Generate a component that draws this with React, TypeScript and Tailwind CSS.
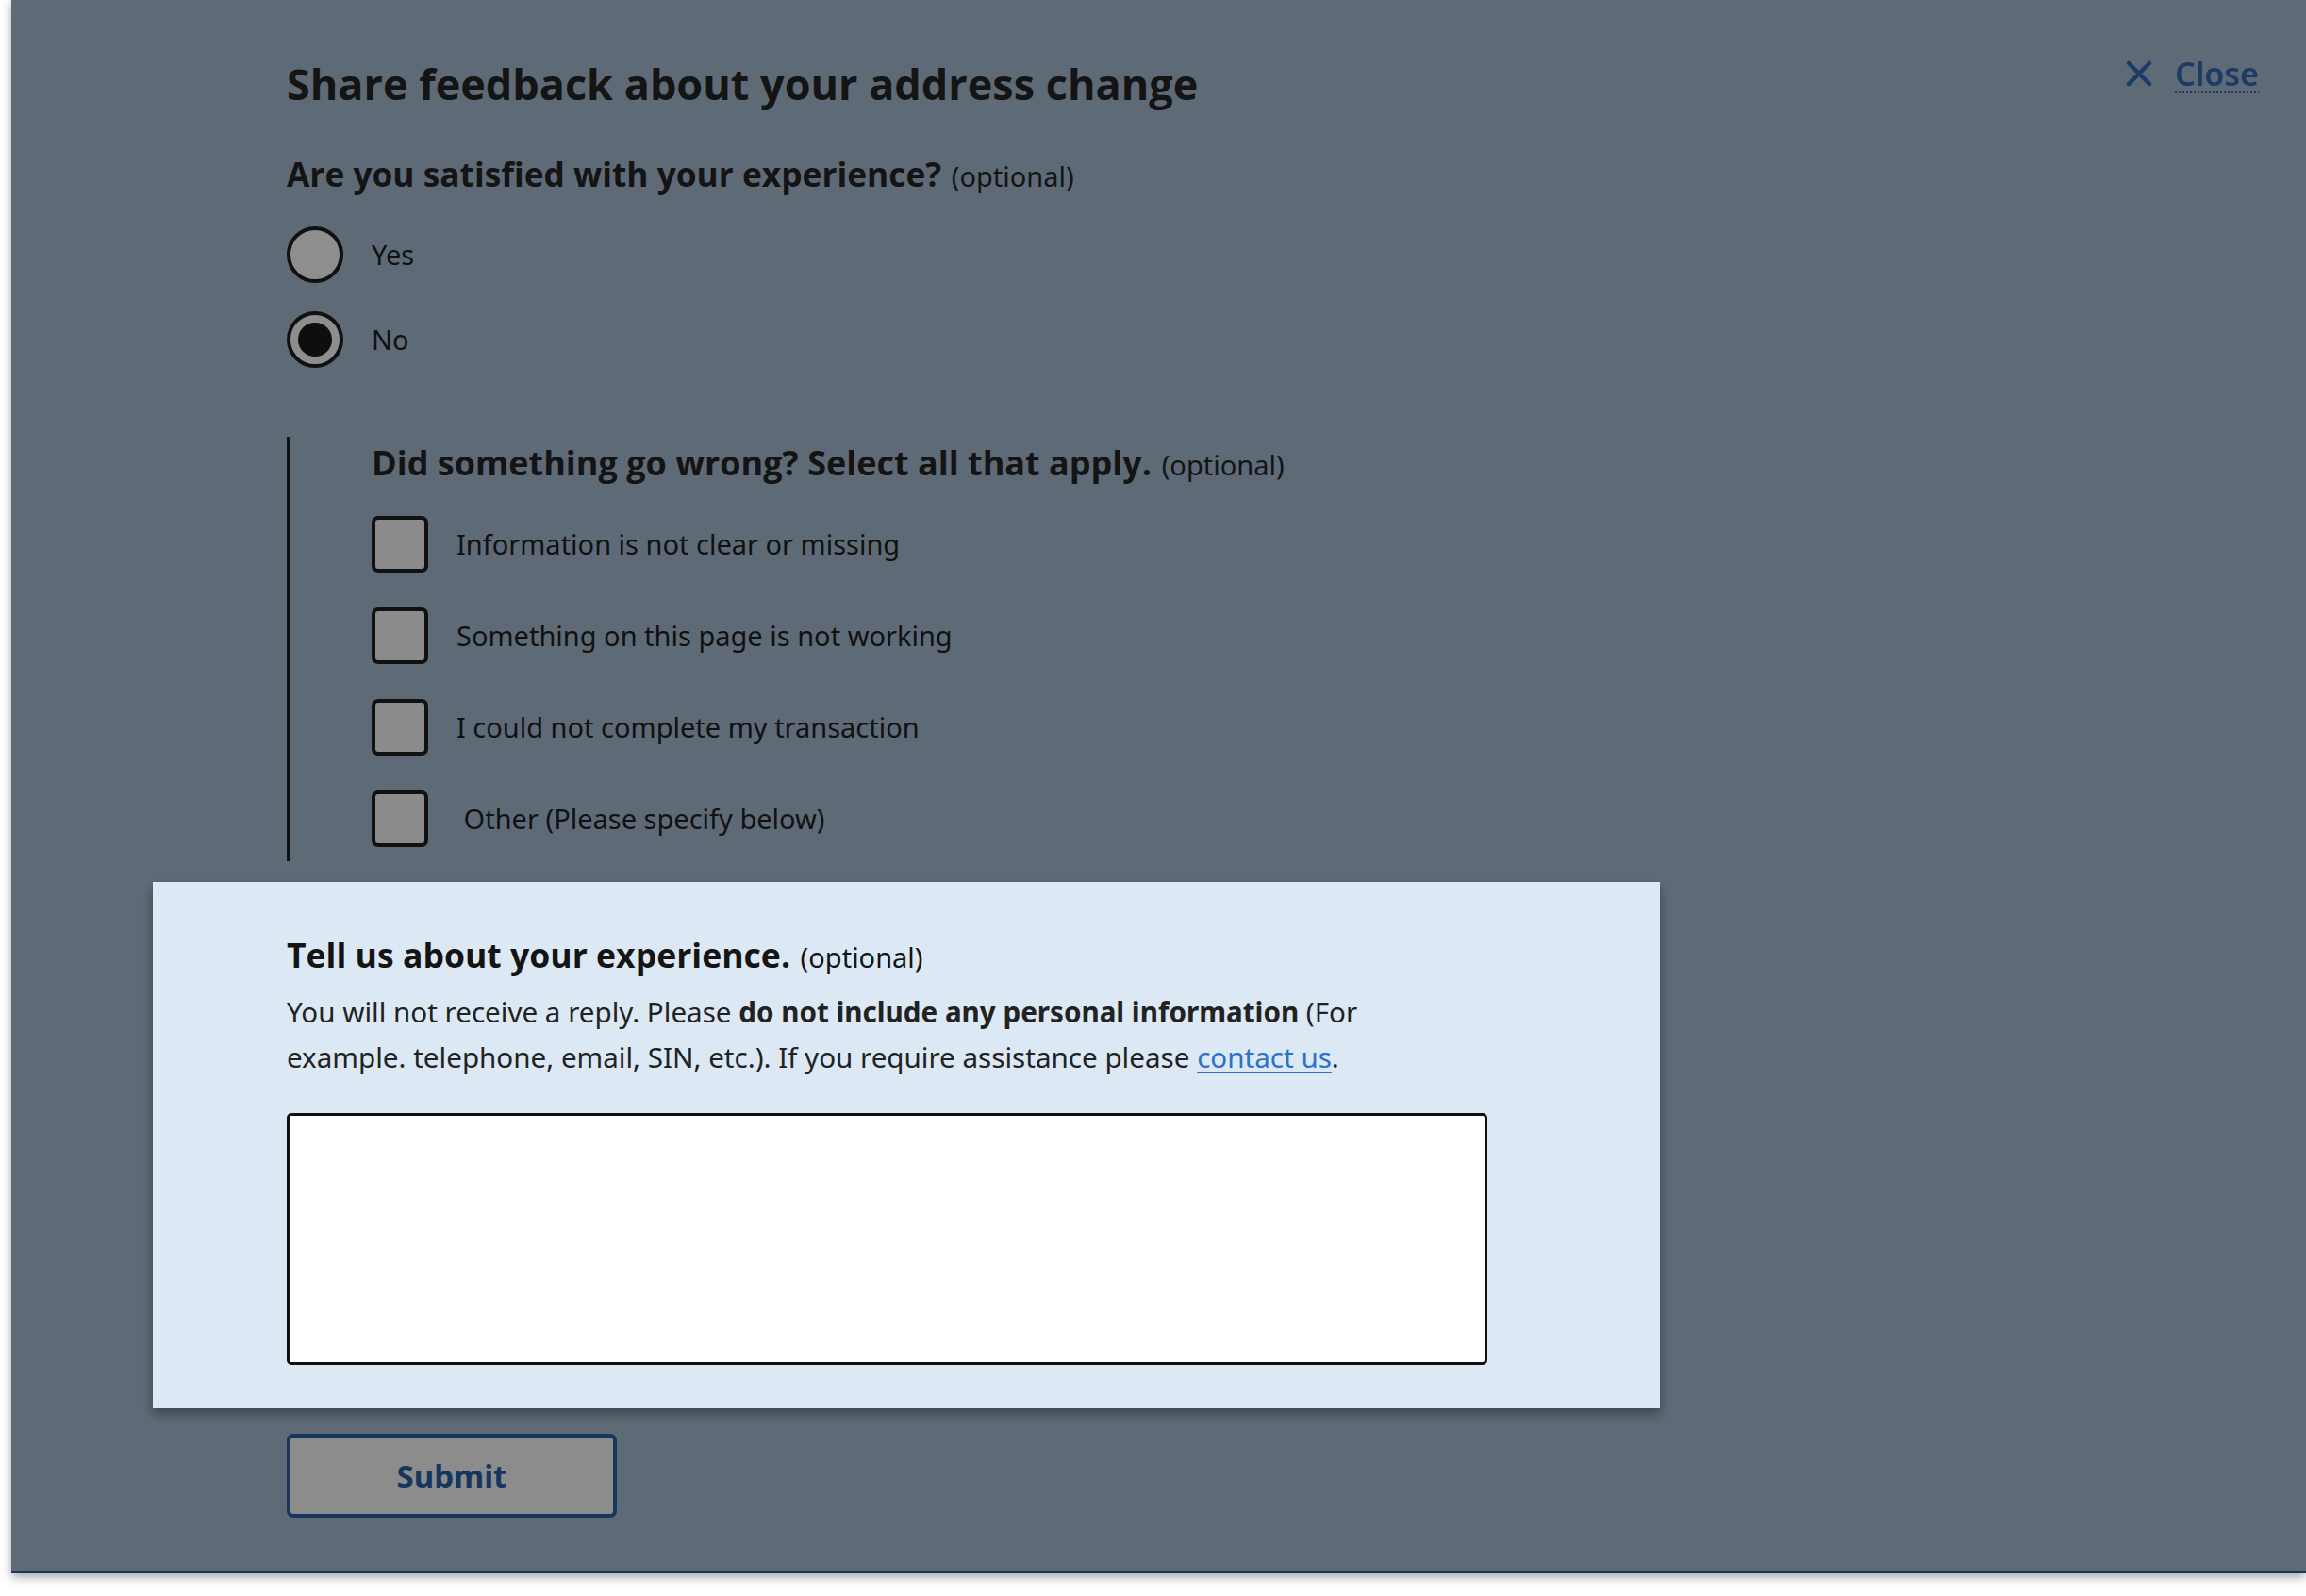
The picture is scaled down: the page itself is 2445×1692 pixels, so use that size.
import { useState } from "react"

const problems = [
  "Information is not clear or missing",
  "Something on this page is not working",
  "I could not complete my transaction",
  " Other (Please specify below)",
]

function Radio({ label, checked, onClick }: { label: string; checked: boolean; onClick: () => void }) {
  return (
    <label className="flex items-center gap-[30px] cursor-pointer" onClick={onClick}>
      <span className="w-[60px] h-[60px] rounded-full border-[4px] border-[#111] bg-[#8e8e8e] flex items-center justify-center">
        {checked && <span className="w-[36px] h-[36px] rounded-full bg-[#0e0e0e]" />}
      </span>
      <span className="text-[29px] text-[#111]">{label}</span>
    </label>
  )
}

function Legend({ text, size }: { text: string; size: string }) {
  return (
    <p className="h-[40px] text-[29px] leading-[40px] text-[#141414] whitespace-nowrap">
      <span className={`font-['Open_Sans',sans-serif] font-bold ${size}`}>{text}</span>{" "}
      <span className="ml-[3px]">(optional)</span>
    </p>
  )
}

export default function App() {
  const [satisfied, setSatisfied] = useState("no")
  const [checked, setChecked] = useState<boolean[]>([false, false, false, false])

  return (
    <div className="w-[2445px] h-[1692px] bg-white overflow-hidden font-['Noto_Sans',sans-serif]">
      <div className="ml-[12px] h-[1668px] bg-[#5f6a77] border-b-[3px] border-[#1b365d] shadow-[0_4px_10px_rgba(0,0,0,0.35)] pl-[292px] pr-[50px] pt-[60px]">
        {/* header */}
        <div className="flex justify-between items-start">
          <h2 className="font-['Open_Sans',sans-serif] font-bold text-[45px] leading-[58px] text-[#141414]">
            Share feedback about your address change
          </h2>
          <button className="flex items-center gap-[24px] -mt-[2px] text-[#1d3b66]">
            <svg width="28" height="28" viewBox="0 0 28 28" fill="none" stroke="currentColor" strokeWidth="4.5" strokeLinecap="round">
              <path d="M3 3 L25 25 M25 3 L3 25" />
            </svg>
            <span className="text-[34px] leading-[40px] font-semibold underline decoration-dotted decoration-2 underline-offset-[6px]">Close</span>
          </button>
        </div>

        <div className="mt-[46px]">
          <Legend text="Are you satisfied with your experience?" size="text-[35.3px]" />
        </div>

        <div className="mt-[36px] flex flex-col gap-[30px]">
          <Radio label="Yes" checked={satisfied === "yes"} onClick={() => setSatisfied("yes")} />
          <Radio label="No" checked={satisfied === "no"} onClick={() => setSatisfied("no")} />
        </div>

        {/* what went wrong */}
        <div className="mt-[73px] border-l-[3px] border-[#111] pl-[87px] pt-[8px] pb-[15px] w-fit">
          <Legend text="Did something go wrong? Select all that apply." size="text-[36px]" />
          <div className="mt-[36px] flex flex-col gap-[37px]">
            {problems.map((p, i) => (
              <label
                key={p}
                className="flex items-center gap-[30px] cursor-pointer"
                onClick={() => setChecked(c => c.map((v, j) => (j === i ? !v : v)))}
              >
                <span className="w-[60px] h-[60px] rounded-[7px] border-[4px] border-[#111] bg-[#8b8b8b] flex items-center justify-center text-[#111] text-[36px] leading-none">
                  {checked[i] ? "✓" : ""}
                </span>
                <span className="text-[29px] text-[#111] whitespace-pre">{p}</span>
              </label>
            ))}
          </div>
        </div>

        {/* comment panel */}
        <div className="mt-[22px] -ml-[142px] w-[1598px] bg-[#dce9f4] pl-[142px] pt-[57px] pb-[46px] shadow-[0_6px_10px_rgba(0,0,0,0.35)]">
          <Legend text="Tell us about your experience." size="text-[35.6px]" />
          <p className="mt-[17px] w-[1220px] text-[29.6px] leading-[48px] text-[#222]">
            You will not receive a reply. Please <strong>do not include any personal information</strong> (For
            example. telephone, email, SIN, etc.). If you require assistance please{" "}
            <a href="#" className="text-[#2b72c8] underline underline-offset-4">contact us</a>.
          </p>
          <textarea className="mt-[35px] block w-[1273px] h-[267px] bg-white border-[3px] border-[#111] rounded-[5px] resize-none" />
        </div>

        <button className="mt-[27px] w-[350px] h-[89px] rounded-[7px] border-[4px] border-[#17365f] bg-[#8b8c8b] text-[#17365f] text-[33px] font-bold">
          Submit
        </button>
      </div>
    </div>
  )
}
